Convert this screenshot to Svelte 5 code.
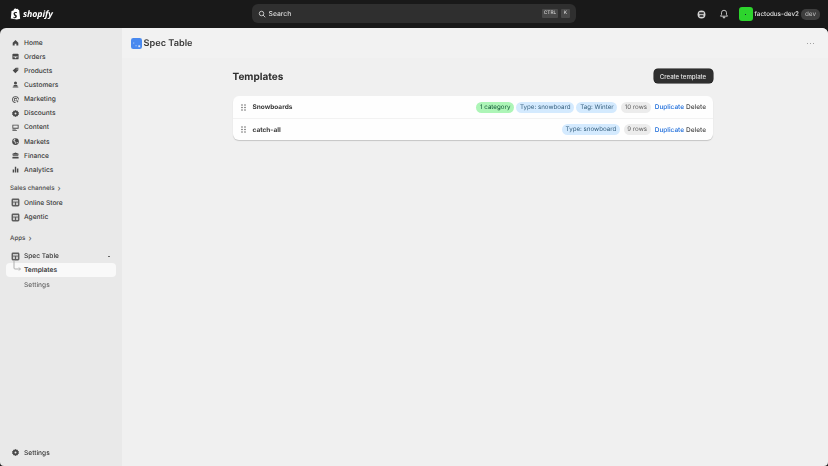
<script>
  const main = [
    ['Home','M3 8.500l5-5 5 5v5H9.500V10h-3v3.500H3z'],
    ['Orders','M2.500 4.500A1.500 1.500 0 0 1 4 3h8a1.500 1.500 0 0 1 1.500 1.500v7A1.500 1.500 0 0 1 12 13H4a1.500 1.500 0 0 1-1.500-1.500zM4 8v1.500h2.500L7.300 11h1.400l.8-1.500H12V8z'],
    ['Products','M8.500 3H13v4.500L7.800 13 3 8.200zM10.800 4.400a.9.9 0 1 0 0 1.800.9.9 0 0 0 0-1.800z'],
    ['Customers','M8 2.500a2.700 2.700 0 1 1 0 5.400 2.700 2.700 0 0 1 0-5.400zM5 9h6l1 2.500H4zM3 12h10v1.500H3z'],
    ['Marketing','M8 2a6 6 0 0 1 6 6h-1.500A4.500 4.500 0 1 0 8 12.500V14A6 6 0 0 1 8 2zM8 5a3 3 0 0 1 3 3H9.500A1.500 1.500 0 1 0 8 9.500V11A3 3 0 0 1 8 5zM9 9l5 1.800-2 .8-.8 2.200z'],
    ['Discounts','M8 1.800l1.700 1.200 2-.1.7 2 1.700 1.200-.6 1.900.6 1.900-1.700 1.200-.7 2-2-.1L8 14.200 6.300 13l-2 .1-.7-2L1.900 9.900l.6-1.900-.6-1.900 1.700-1.200.7-2 2 .1zM8 6.300a1.700 1.700 0 1 0 0 3.400 1.700 1.700 0 0 0 0-3.400z'],
    ['Content','M2.500 3h11v7h-11zM4 4.500v4h8v-4zM2.500 11h6v1.200h-6zM2.500 13h8v1.200h-8z'],
    ['Markets','M8 2a6 6 0 1 1 0 12A6 6 0 0 1 8 2zM5 4.500L4 7l2.500 1.500.5 3 1.500 1-.5-4.500-2-1.500 2-2-1-1zM10 9l.5 3 2-2.500z'],
    ['Finance','M8 2.500l5.500 2.500v1.500h-11V5zM3 7.500h10v2H3zM2.500 10.500h11v3h-11z'],
    ['Analytics','M3 8h2.500v5.500H3zM6.800 3h2.500v10.500H6.800zM10.600 6h2.500v7.500h-2.500z']
  ];
  const rows = [
    { name:'Snowboards', green:'1 category', blue:['Type: snowboard','Tag: Winter'], count:'10 rows' },
    { name:'catch-all', green:null, blue:['Type: snowboard'], count:'9 rows' }
  ];
</script>

{#snippet icon(d)}
  <svg class="ic" viewBox="0 0 16 16"><path d={d} fill-rule="evenodd" /></svg>
{/snippet}
{#snippet appIcon()}
  <svg class="ic" viewBox="0 0 16 16">
    <rect x="1" y="1" width="14" height="14" rx="2.500" fill="#5c5c5c"/>
    <rect x="3.500" y="3.500" width="9" height="3" fill="#cfcfcf"/>
    <rect x="3.500" y="8" width="3.500" height="4.500" fill="#cfcfcf"/>
    <rect x="9" y="8" width="3.500" height="4.500" fill="#cfcfcf"/>
  </svg>
{/snippet}

<div class="shell">
  <div class="notch"></div>
  <header class="top">
    <div class="logo">
      <svg viewBox="0 0 16 18" class="bag">
        <path d="M2 4.500L5 3.600C5.500 1.800 6.600.8 7.800.8c.5 0 .9.2 1.200.6l2-.1 1.200 1.400 1.200.2L15 16l-5 1.200L1 15.600z" fill="#fff"/>
        <path d="M10.200 6.200l-.6 1.800c-1.500-.7-2.600-.2-2.600.6 0 1 3 1.400 3 3.900 0 2-1.300 3-3 3-1.200 0-2.200-.6-2.200-.6l.5-1.700s1 .7 1.700.7c.6 0 .8-.4.8-.7 0-1.400-2.500-1.500-2.500-3.700C4.300 7.500 6 6 8 6c1.300 0 2.200.2 2.200.2z" fill="#1a1a1a"/>
      </svg>
      <span class="word">shopify</span>
    </div>
    <div class="search">
      <svg viewBox="0 0 16 16" class="sicon"><circle cx="7" cy="7" r="4.500" fill="none" stroke="#e3e3e3" stroke-width="1.600"/><path d="M10.500 10.500L14 14" stroke="#e3e3e3" stroke-width="1.600" stroke-linecap="round"/></svg>
      <span class="stext">Search</span>
      <span class="keys"><kbd class="k1">CTRL</kbd><kbd class="k2">K</kbd></span>
    </div>
    <div class="right">
      <svg viewBox="0 0 16 16" class="tool"><circle cx="8" cy="8" r="7" fill="#d6d6d6"/><rect x="4" y="4" width="8" height="3.500" fill="#333"/><rect x="4.500" y="9" width="7" height="3.500" rx="1" fill="#444"/></svg>
      <svg viewBox="0 0 16 16" class="tool bell"><path d="M8 2a4 4 0 0 1 4 4v3l1.500 2.500h-11L4 9V6a4 4 0 0 1 4-4zM6.500 13h3a1.500 1.500 0 0 1-3 0z" fill="none" stroke="#e3e3e3" stroke-width="1.300" stroke-linejoin="round"/></svg>
      <div class="avatar"><span></span></div>
      <span class="store">factodus-dev2</span>
      <span class="dev">dev</span>
    </div>
  </header>

  <div class="body">
    <aside class="side">
      <nav class="nav">
        {#each main as [label, d]}
          <div class="item">{@render icon(d)}<span>{label}</span></div>
        {/each}
      </nav>
      <div class="sect first">Sales channels <b>›</b></div>
      <div class="item">{@render appIcon()}<span>Online Store</span></div>
      <div class="item">{@render appIcon()}<span>Agentic</span></div>
      <div class="sect second">Apps <b>›</b></div>
      <div class="item app">{@render appIcon()}<span>Spec Table</span><i class="dot"></i></div>
      <div class="item sub active">
        <svg class="tree" viewBox="0 0 14 14"><path d="M3 0v8a1 1 0 0 0 1 1h5M8 7.500l1.500 1.500L8 10.500" fill="none" stroke="#b0b0b0" stroke-width="1"/></svg>
        <span>Templates</span>
      </div>
      <div class="item sub muted"><span>Settings</span></div>
      <div class="grow"></div>
      <div class="item bottom">{@render icon(main[5][1])}<span>Settings</span></div>
    </aside>

    <main class="content">
      <div class="bar">
        <div class="title">
          <svg viewBox="0 0 12 12" class="blue"><rect width="12" height="12" rx="2.500" fill="#4a8af0"/><rect x="2.500" y="5" width="1" height="1" fill="#d8e6fb"/><rect x="5" y="8" width="1" height="1" fill="#d8e6fb"/><rect x="8" y="8" width="2" height="2" fill="#d8e6fb"/></svg>
          <span>Spec Table</span>
        </div>
        <div class="more"><i></i><i></i><i></i></div>
      </div>
      <section class="page">
        <div class="phead">
          <h1>Templates</h1>
          <button class="create">Create template</button>
        </div>
        <div class="card">
          {#each rows as r}
            <div class="row">
              <svg class="grip" viewBox="0 0 6 8"><g fill="#4a4a4a"><circle cx="1.200" cy="1" r=".8"/><circle cx="4.800" cy="1" r=".8"/><circle cx="1.200" cy="4" r=".8"/><circle cx="4.800" cy="4" r=".8"/><circle cx="1.200" cy="7" r=".8"/><circle cx="4.800" cy="7" r=".8"/></g></svg>
              <span class="name">{r.name}</span>
              <div class="chips">
                {#if r.green}<span class="chip green">{r.green}</span>{/if}
                {#each r.blue as b}<span class="chip bluec">{b}</span>{/each}
                <span class="chip grey">{r.count}</span>
              </div>
              <span class="dup">Duplicate</span>
              <span class="del">Delete</span>
            </div>
          {/each}
        </div>
      </section>
    </main>
  </div>
</div>

<style>
  :global(body){margin:0;background:#1a1a1a;}
  .shell{width:828px;height:466px;display:flex;flex-direction:column;overflow:hidden;position:relative;font-family:Inter,"Liberation Sans",sans-serif;color:#303030;font-size:6.600px;font-weight:500;text-rendering:geometricPrecision;opacity:.999;}
  .notch{position:absolute;top:0;left:365px;width:97px;height:1px;background:#8a8a8a;}
  .top{height:28px;flex:none;background:#1a1a1a;display:flex;align-items:center;position:relative;padding:0 8px 0 10px;}
  .logo{display:flex;align-items:center;gap:2px;width:242px;flex:none;}
  .bag{width:11px;height:12px;}
  .word{font-family:"Open Sans","Liberation Sans",sans-serif;font-style:italic;font-weight:700;color:#fff;font-size:8.800px;letter-spacing:-.1px;margin-top:-1px;}
  .search{width:324px;height:19px;flex:none;box-sizing:border-box;background:#303030;border-radius:6px;display:flex;align-items:center;padding:0 6px;color:#e3e3e3;margin-top:-1px;}
  .sicon{width:8px;height:8px;margin-right:2.500px;}
  .stext{font-size:6.800px;color:#d8d8d8;}
  .keys{margin-left:auto;display:flex;gap:3px;}
  kbd{font-family:Inter,sans-serif;font-size:4.800px;background:#4a4a4a;color:#d0d0d0;height:9px;line-height:9px;text-align:center;border-radius:1px;}
  .k1{width:16px;}.k2{width:9px;}
  .right{margin-left:auto;display:flex;align-items:center;color:#e3e3e3;}
  .tool{width:9px;height:9px;}
  .bell{margin-left:13px;width:10px;height:10px;}
  .avatar{width:14px;height:14px;background:#2ed52e;border-radius:3px;margin-left:10px;display:flex;align-items:center;justify-content:center;}
  .avatar span{width:1px;height:1px;background:#123;}
  .store{margin-left:2px;color:#e3e3e3;font-size:6.300px;}
  .dev{margin-left:2px;background:#3f3f3f;color:#b5b5b5;font-size:6.300px;padding:1.500px 4px;border-radius:5px;}
  .body{flex:1;display:flex;min-height:0;border-radius:6px 6px 4px 4px;overflow:hidden;background:#f1f1f1;}
  .side{width:121.500px;flex:none;background:rgba(0,0,0,.026);display:flex;flex-direction:column;padding:7.500px 6px 6px;box-sizing:border-box;}
  .nav{display:flex;flex-direction:column;}
  .item{height:14.150px;display:flex;align-items:center;padding-left:5px;flex:none;color:#3a3a3a;}
  .item span{margin-left:4px;}
  .ic{width:9px;height:9px;flex:none;fill:#4a4a4a;}
  .sect{font-size:6.200px;color:#4a4a4a;padding-left:4px;height:14px;display:flex;align-items:center;flex:none;}
  .sect b{font-weight:400;margin-left:3px;font-size:8px;margin-top:-1px;}
  .first{margin-top:5px;}
  .second{margin-top:7px;}
  .app{margin-top:4px;position:relative;}
  .dot{position:absolute;right:6px;top:6.500px;width:1.500px;height:1.500px;background:#555;border-radius:50%;}
  .sub{padding-left:18px;position:relative;}
  .sub span{margin-left:0;}
  .active{background:#fafafa;border-radius:4px;font-weight:600;}
  .muted{color:#6b6b6b;}
  .tree{position:absolute;left:5px;top:-3px;width:14px;height:14px;}
  .grow{flex:1;}
  .content{flex:1;min-width:0;display:flex;flex-direction:column;}
  .bar{height:30px;flex:none;display:flex;align-items:center;justify-content:space-between;padding:1px 14px 0 9.500px;box-sizing:border-box;background:#f3f3f3;}
  .title{display:flex;align-items:center;gap:1.500px;font-size:9.200px;font-weight:600;color:#3a3a3a;}
  .blue{width:11px;height:11px;}
  .more{display:flex;gap:1.500px;}
  .more i{width:1.500px;height:1.500px;background:#888;border-radius:50%;}
  .page{width:480px;margin-left:111px;}
  .phead{display:flex;align-items:center;justify-content:space-between;height:14px;margin-top:11px;}
  h1{margin:0;font-size:10px;font-weight:700;color:#303030;position:relative;top:.5px;}
  .create{border:0;height:14px;width:59px;padding:0;border-radius:4px;background:#303030;color:#e8e8e8;font:500 6.100px Inter,sans-serif;box-shadow:0 0 0 .5px #111;}
  .card{margin-top:13px;background:#fff;border-radius:6px;box-shadow:0 1px 1px rgba(0,0,0,.18);}
  .row{height:22px;display:flex;align-items:center;padding:0 6.500px 0 8px;box-sizing:border-box;}
  .row + .row{border-top:.5px solid #f3f3f3;}
  .grip{width:5px;height:7px;flex:none;}
  .name{margin-left:7px;font-weight:650;font-size:6.500px;color:#3a3a3a;}
  .chips{margin-left:auto;display:flex;gap:2.200px;margin-right:4px;}
  .chip{height:11px;line-height:11px;padding:0 3.700px;border-radius:5.500px;font-size:6.200px;white-space:nowrap;font-weight:400;}
  .green{background:#aef6b8;color:#0c5132;}
  .bluec{background:#d5ebff;color:#36607f;}
  .grey{background:#ededed;color:#616161;margin-left:1.500px;}
  .dup{color:#1a6bdb;font-size:6.500px;font-weight:500;}
  .del{color:#4a4a4a;font-size:6.500px;margin-left:2px;}
</style>
